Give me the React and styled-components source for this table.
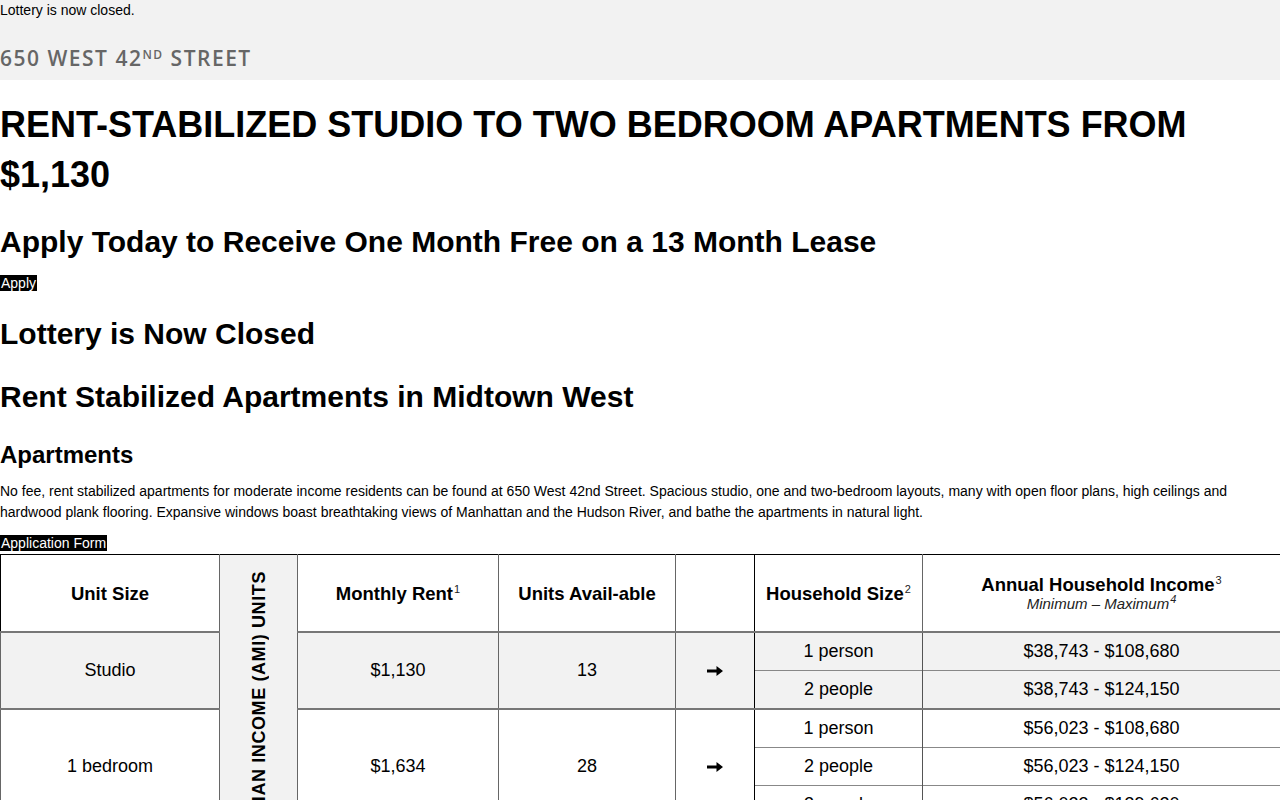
import styled, { createGlobalStyle } from 'styled-components';

const GlobalStyle = createGlobalStyle`
  body {
    margin: 0;
    background: #fff;
    color: #000;
    font-family: "Liberation Sans", Arial, sans-serif;
  }
`;

const rows = [
  {
    size: 'Studio',
    rent: '$1,130',
    units: '13',
    shaded: true,
    people: [
      ['1 person', '$38,743 - $108,680'],
      ['2 people', '$38,743 - $124,150'],
    ],
  },
  {
    size: '1 bedroom',
    rent: '$1,634',
    units: '28',
    shaded: false,
    people: [
      ['1 person', '$56,023 - $108,680'],
      ['2 people', '$56,023 - $124,150'],
      ['3 people', '$56,023 - $139,620'],
    ],
  },
  {
    size: '2 bedroom',
    rent: '$1,960',
    units: '19',
    shaded: true,
    people: [
      ['2 people', '$67,200 - $124,150'],
      ['3 people', '$67,200 - $139,620'],
      ['4 people', '$67,200 - $155,100'],
      ['5 people', '$67,200 - $167,570'],
    ],
  },
];

const totalRows = rows.reduce((n, r) => n + r.people.length, 0);

function Arrow() {
  return (
    <ArrowIcon width="16" height="10" viewBox="0 0 16 10" aria-label="→">
      <path d="M0 3.6h9.5V0L16 5l-6.5 5V6.4H0z" fill="#000" />
    </ArrowIcon>
  );
}

export default function App() {
  return (
    <>
      <GlobalStyle />
      <TopBar>
        <Notice>Lottery is now closed.</Notice>
        <Street>
          650 West 42<sup>nd</sup> Street
        </Street>
      </TopBar>
      <Main>
        <Title>RENT-STABILIZED STUDIO TO TWO BEDROOM APARTMENTS FROM $1,130</Title>
        <Heading>Apply Today to Receive One Month Free on a 13 Month Lease</Heading>
        <BlackLink href="#">Apply</BlackLink>
        <Heading $top={26}>Lottery is Now Closed</Heading>
        <Heading $top={29}>Rent Stabilized Apartments in Midtown West</Heading>
        <SubHeading>Apartments</SubHeading>
        <Text>
          No fee, rent stabilized apartments for moderate income residents can be found at 650 West
          42nd Street. Spacious studio, one and two-bedroom layouts, many with open floor plans,
          high ceilings and hardwood plank flooring. Expansive windows boast breathtaking views of
          Manhattan and the Hudson River, and bathe the apartments in natural light.
        </Text>
        <BlackLink href="#">Application Form</BlackLink>
        <Table>
          <colgroup>
            <col style={{ width: 219 }} />
            <col style={{ width: 78 }} />
            <col style={{ width: 201 }} />
            <col style={{ width: 177 }} />
            <col style={{ width: 79 }} />
            <col style={{ width: 168 }} />
            <col style={{ width: 358 }} />
          </colgroup>
          <tbody>
            <tr>
              <HeadCell>Unit Size</HeadCell>
              <AmiCell rowSpan={totalRows + 1}>
                <AmiText>AREA MEDIAN INCOME (AMI) UNITS</AmiText>
              </AmiCell>
              <HeadCell>
                Monthly Rent<Sup>1</Sup>
              </HeadCell>
              <HeadCell>Units Avail-able</HeadCell>
              <HeadCell $dark />
              <HeadCell>
                Household Size<Sup>2</Sup>
              </HeadCell>
              <HeadCell>
                Annual Household Income<Sup>3</Sup>
                <Range>
                  Minimum – Maximum<Sup>4</Sup>
                </Range>
              </HeadCell>
            </tr>
            {rows.map((row) =>
              row.people.map(([who, income], i) => (
                <BodyRow key={row.size + who} $shaded={row.shaded} $first={i === 0}>
                  {i === 0 && (
                    <>
                      <Cell rowSpan={row.people.length}>{row.size}</Cell>
                      <Cell rowSpan={row.people.length}>{row.rent}</Cell>
                      <Cell rowSpan={row.people.length}>{row.units}</Cell>
                      <ArrowCell rowSpan={row.people.length}>
                        <Arrow />
                      </ArrowCell>
                    </>
                  )}
                  <SmallCell>{who}</SmallCell>
                  <SmallCell>{income}</SmallCell>
                </BodyRow>
              ))
            )}
          </tbody>
        </Table>
      </Main>
    </>
  );
}

const TopBar = styled.header`
  background: #f2f2f2;
  height: 80px;
  box-sizing: border-box;
`;

const Notice = styled.div`
  font-size: 14px;
  line-height: 20px;
`;

const Street = styled.div`
  margin-top: 25px;
  font-family: "Open Sans", "Liberation Sans", sans-serif;
  font-size: 21px;
  font-weight: 600;
  letter-spacing: 1.5px;
  text-transform: uppercase;
  color: #666;
  line-height: 26px;

  sup {
    font-size: 12px;
    vertical-align: top;
    position: relative;
    top: -3px;
  }
`;

const Main = styled.main`
  display: flex;
  flex-direction: column;
  align-items: flex-start;
`;

const Title = styled.h1`
  margin: 20px 0 0;
  font-size: 36px;
  line-height: 50px;
  font-weight: 700;
`;

const Heading = styled.h2`
  margin: ${(p) => p.$top ?? 25}px 0 0;
  font-size: 30px;
  line-height: 34px;
  font-weight: 700;
`;

const SubHeading = styled.h3`
  margin: 27px 0 0;
  font-size: 24px;
  line-height: 28px;
  font-weight: 700;
`;

const Text = styled.p`
  margin: 12px 0 0;
  font-size: 14px;
  line-height: 21px;
`;

const BlackLink = styled.a`
  margin-top: 16px;
  display: inline-block;
  background: #000;
  color: #fff;
  font-size: 14px;
  line-height: 16px;
  text-decoration: none;
  padding: 0 1px;

  ${Text} + & {
    margin-top: 12px;
  }
`;

const Table = styled.table`
  margin-top: 3px;
  width: 1280px;
  table-layout: fixed;
  border-collapse: collapse;
  border: 1px solid #000;
  font-size: 18px;
  text-align: center;
`;

const HeadCell = styled.th`
  height: 76px;
  padding: 0 8px;
  border: 1px solid #000;
  border-right-color: ${(p) => (p.$dark ? '#000' : '#666')};
  font-weight: 700;
  font-size: 18.5px;
  line-height: 21px;
  vertical-align: middle;
`;

const Sup = styled.sup`
  font-size: 11px;
  font-weight: 400;
  color: #222;
  vertical-align: top;
  position: relative;
  top: -4px;
  margin-left: 1px;
`;

const Range = styled.div`
  font-size: 15px;
  font-weight: 400;
  font-style: italic;
  line-height: 17px;
  color: #222;
`;

const AmiCell = styled.th`
  background: #f2f2f2;
  border: 1px solid #666;
  border-top-color: #000;
  vertical-align: top;
  padding: 16px 0 0;
  text-align: center;
`;

const AmiText = styled.span`
  display: inline-block;
  writing-mode: vertical-rl;
  transform: rotate(180deg);
  font-size: 18px;
  font-weight: 700;
  letter-spacing: 0.6px;
  line-height: 20px;
  white-space: nowrap;
`;

const BodyRow = styled.tr`
  background: ${(p) => (p.$shaded ? '#f2f2f2' : '#fff')};
  border-top: ${(p) => (p.$first ? '2px solid #777' : '1px solid #888')};
`;

const Cell = styled.td`
  border-left: 1px solid #666;
  border-right: 1px solid #666;
  line-height: 21px;
  padding: 0 8px;
`;

const ArrowCell = styled(Cell)`
  border-left-color: #000;
  border-right-color: #000;
`;

const ArrowIcon = styled.svg`
  display: block;
  margin: 0 auto;
`;

const SmallCell = styled.td`
  height: 37px;
  padding: 0 8px;
  border-left: 1px solid #555;
  line-height: 21px;
`;
